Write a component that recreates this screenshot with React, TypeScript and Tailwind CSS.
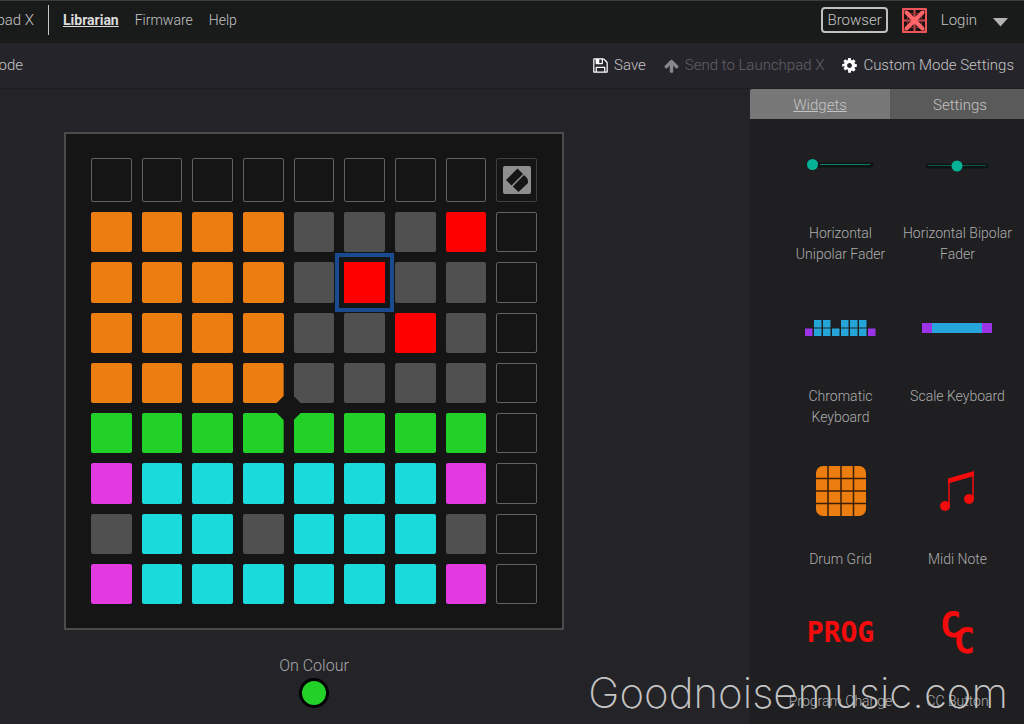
import React, { useState } from "react";
import clsx from "clsx";

const PAD_COLOURS: Record<string, string> = {
  ".": "border border-[#626262]",
  g: "bg-[#505050]",
  o: "bg-[#ec7d10]",
  r: "bg-[#ff0000]",
  n: "bg-[#22d128]",
  c: "bg-[#1adadb]",
  m: "bg-[#e03ae0]",
};

const PAD_ROWS = [
  "oooogggr.",
  "oooogrgg.",
  "ooooggrg.",
  "oooogggg.",
  "nnnnnnnn.",
  "mccccccm.",
  "gccgcccg.",
  "mccccccm.",
];

// the four middle pads have the corner facing the centre cut off
const CUT_CORNERS: Record<string, string> = {
  "3-3": "[clip-path:polygon(0_0,100%_0,100%_calc(100%-7px),calc(100%-7px)_100%,0_100%)]",
  "3-4": "[clip-path:polygon(0_0,100%_0,100%_100%,7px_100%,0_calc(100%-7px))]",
  "4-3": "[clip-path:polygon(0_0,calc(100%-7px)_0,100%_7px,100%_100%,0_100%)]",
  "4-4": "[clip-path:polygon(7px_0,100%_0,100%_100%,0_100%,0_7px)]",
};

const SaveIcon = () => (
  <svg viewBox="0 0 1536 1792" className="h-[17px] w-[15px]" fill="currentColor" aria-hidden="true">
    <path d="M384 1536h768v-384H384v384zm896 0h128V640q0-14-10-38.5t-20-34.5l-281-281q-10-10-34-20t-39-10v416q0 40-28 68t-68 28H352q-40 0-68-28t-28-68V256H128v1280h128v-416q0-40 28-68t68-28h832q40 0 68 28t28 68v416zM896 608V288q0-13-9.5-22.5T864 256H672q-13 0-22.5 9.500T640 288v320q0 13 9.500 22.500T672 640h192q13 0 22.500-9.500T896 608zm640 32v928q0 40-28 68t-68 28H96q-40 0-68-28t-28-68V224q0-40 28-68t68-28h928q40 0 88 20t76 48l280 280q28 28 48 76t20 88z" />
  </svg>
);

const ArrowUpIcon = () => (
  <svg viewBox="0 0 1664 1792" className="h-4 w-[15px]" fill="currentColor" aria-hidden="true">
    <path d="M1611 971q0 51-37 90l-75 75q-38 38-91 38-54 0-90-38l-294-293v704q0 52-37.5 84.500T896 1664H768q-53 0-90.500-32.500T640 1547V843l-294 293q-36 38-90 38t-90-38l-75-75q-38-38-38-90 0-53 38-91l651-651q35-37 90-37 54 0 91 37l651 651q37 39 37 91z" />
  </svg>
);

const CogIcon = () => (
  <svg viewBox="0 0 1536 1792" className="h-[17px] w-[15px]" fill="currentColor" aria-hidden="true">
    <path d="M1024 896q0-106-75-181t-181-75-181 75-75 181 75 181 181 75 181-75 75-181zm512-109v222q0 12-8 23t-20 13l-185 28q-19 54-39 91 35 50 107 138 10 12 10 25t-9 23q-27 37-99 108t-94 71q-12 0-26-9l-138-108q-44 23-91 38-16 136-29 186-7 28-36 28H657q-14 0-24.5-8.500T621 1506l-28-184q-49-16-90-37l-141 107q-10 9-25 9-14 0-25-11-126-114-165-168-7-10-7-23 0-12 8-23 15-21 51-66.500t54-70.500q-27-50-41-99L29 1025q-13-2-21-12.500T0 989V767q0-12 8-23t19-13l186-28q14-46 39-92-40-57-107-138-10-12-10-24 0-10 9-23 26-36 98.500-107.500T337 247q13 0 26 10l138 107q44-23 91-38 16-136 29-186 7-28 36-28h222q14 0 24.500 8.500T915 142l28 184q49 16 90 37l142-107q9-9 24-9 13 0 25 10 129 119 165 170 7 8 7 22 0 12-8 23-15 21-51 66.500t-54 70.500q26 50 41 98l183 28q13 2 21 12.500t8 23.500z" />
  </svg>
);

const DisconnectedIcon = () => (
  <svg viewBox="0 0 25 25" className="h-[25px] w-[25px]" aria-hidden="true">
    <rect width="25" height="25" rx="1" fill="#e8565a" />
    <rect x="2" y="2" width="21" height="21" rx="2" fill="#1f1112" />
    <path d="M12.500 2v21M2 12.500h21" stroke="#c94a4e" strokeWidth="2" />
    <rect x="5.500" y="5.500" width="14" height="14" rx="4" fill="none" stroke="#8e3538" strokeWidth="1" />
    <path d="M4.500 4.500l16 16M20.500 4.500l-16 16" stroke="#ff6569" strokeWidth="4" strokeLinecap="round" />
  </svg>
);

const NovationIcon = () => (
  <svg viewBox="0 0 28 28" className="h-7 w-7" aria-hidden="true">
    <rect width="28" height="28" rx="2" fill="#8e8e8e" />
    <path d="M14.500 2.500 20 8 8.500 19.500 3 14z" fill="#151515" />
    <path d="M21 9l3 3q1.500 2 1 5L15.500 26 9.800 20.500z" fill="#151515" />
  </svg>
);

const UnipolarFader = () => (
  <svg width="68" height="14" aria-hidden="true">
    <path d="M8 7h56" stroke="#0c1513" strokeWidth="5" strokeLinecap="round" />
    <path d="M13 6.500h50" stroke="#0d7f69" />
    <circle cx="5.500" cy="6.500" r="5.500" fill="#06b296" />
  </svg>
);

const BipolarFader = () => (
  <svg width="68" height="14" aria-hidden="true">
    <path d="M4 8h58" stroke="#0c1513" strokeWidth="5" strokeLinecap="round" />
    <path d="M4 7.500h58" stroke="#0b5a42" />
    <circle cx="33" cy="8" r="5.500" fill="#06b296" />
  </svg>
);

const ChromaticIcon = () => (
  <svg width="72" height="16" aria-hidden="true">
    {[9, 18, 36, 45, 54].map((x) => (
      <rect key={x} x={x} width="7.500" height="7.500" fill="#25a5da" />
    ))}
    {[0, 9, 18, 27, 36, 45, 54, 63].map((x) => (
      <rect key={x} x={x} y="8.500" width="7.500" height="7.500" fill={x % 63 ? "#25a5da" : "#9a34e6"} />
    ))}
  </svg>
);

const ScaleIcon = () => (
  <svg width="72" height="10" aria-hidden="true">
    <rect width="70" height="10" fill="#9a34e6" />
    <rect x="10" width="50" height="10" fill="#25a5da" />
  </svg>
);

const DrumGridIcon = () => (
  <svg width="50" height="50" aria-hidden="true">
    <rect width="50" height="50" rx="7" fill="#ec7d10" />
    <path d="M12 0v50M25 0v50M37.500 0v50M0 12.500h50M0 25h50M0 37.500h50" stroke="#3b1f06" strokeWidth="1.500" />
  </svg>
);

const MidiNoteIcon = () => (
  <svg width="38" height="42" aria-hidden="true">
    <path d="M10 37V10l24-7v26" fill="none" stroke="#f40b0b" strokeWidth="1.500" />
    <path d="M9 8.500 35 1v5L9 13.500z" fill="#f40b0b" />
    <circle cx="6" cy="36" r="5" fill="#f40b0b" />
    <circle cx="30" cy="29" r="5" fill="#f40b0b" />
  </svg>
);

const ProgIcon = () => (
  <span className="font-['DejaVu_Sans_Mono',monospace] text-[28px] leading-none font-bold text-[#f40b0b]">
    PROG
  </span>
);

const CCIcon = () => (
  <span className="flex font-['DejaVu_Sans_Mono',monospace] text-[36px] leading-none font-bold text-[#f40b0b]">
    <span className="-mr-2 pb-4">C</span>
    <span className="pt-4">C</span>
  </span>
);

const WIDGETS = [
  { label: "Horizontal Unipolar Fader", icon: <UnipolarFader /> },
  { label: "Horizontal Bipolar Fader", icon: <BipolarFader /> },
  { label: "Chromatic Keyboard", icon: <ChromaticIcon /> },
  { label: "Scale Keyboard", icon: <ScaleIcon /> },
  { label: "Drum Grid", icon: <DrumGridIcon /> },
  { label: "Midi Note", icon: <MidiNoteIcon /> },
  { label: "Program Change", icon: <ProgIcon /> },
  { label: "CC Button", icon: <CCIcon /> },
];

const Header = () => (
  <header className="flex h-[43px] shrink-0 items-center border-t border-[#3a4035] bg-[#191b1b] pr-4 pb-1 text-[15px]">
    <div className="flex w-[34px] justify-end overflow-hidden whitespace-nowrap">pad X</div>
    <div className="ml-3.5 h-[30px] w-px bg-[#c8c8c8]" />
    <nav className="ml-3.5 flex gap-4 text-sm">
      <a href="#librarian" className="font-bold text-[#dcdcdc] underline">
        Librarian
      </a>
      <a href="#firmware">Firmware</a>
      <a href="#help">Help</a>
    </nav>
    <div className="ml-auto flex items-center">
      <button className="h-[26px] rounded border-2 border-[#c0c0c0] px-1 leading-5">Browser</button>
      <span className="ml-3.5">
        <DisconnectedIcon />
      </span>
      <button className="ml-3.5 flex items-center gap-4">
        Login
        <svg width="15" height="9" className="mt-1" aria-hidden="true">
          <path d="M0 0h15L7.500 8.500z" fill="#b4b4b4" />
        </svg>
      </button>
    </div>
  </header>
);

const Toolbar = () => (
  <div className="flex h-[46px] shrink-0 items-center justify-between border-b border-[#1f1f22] bg-[#26242b] pr-2.5 text-[15px]">
    <div className="flex w-[23px] justify-end overflow-hidden">ode</div>
    <div className="flex gap-[18px]">
      <button className="flex items-center gap-1.5">
        <span className="text-white">
          <SaveIcon />
        </span>
        Save
      </button>
      <button className="flex items-center gap-1.5 text-[#626166]" disabled>
        <span className="text-[#88878b]">
          <ArrowUpIcon />
        </span>
        Send to Launchpad X
      </button>
      <button className="flex items-center gap-1.5">
        <span className="text-white">
          <CogIcon />
        </span>
        Custom Mode Settings
      </button>
    </div>
  </div>
);

const Board = () => {
  const [selected, setSelected] = useState("1-5");

  return (
    <div className="border-2 border-[#4b4b4b] bg-[#151515] px-[25px] py-6">
      <div className="grid h-[446px] grid-cols-9 grid-rows-[44px_repeat(8,1fr)] gap-2.5">
        {Array.from({ length: 8 }, (_, i) => (
          <button key={i} aria-label={`Top ${i + 1}`} className="rounded-xs border border-[#626262]" />
        ))}
        <div className="flex items-center justify-center rounded-xs border border-[#404040]">
          <NovationIcon />
        </div>
        {PAD_ROWS.map((row, y) =>
          row.split("").map((cell, x) => {
            const id = `${y}-${x}`;
            return (
              <button
                key={id}
                aria-label={`Pad ${y + 1}, ${x + 1}`}
                aria-pressed={selected === id}
                onClick={() => setSelected(id)}
                className={clsx(
                  PAD_COLOURS[cell],
                  CUT_CORNERS[id],
                  selected === id
                    ? "z-10 outline-4 outline-offset-5 outline-[#1a4a8f]"
                    : "rounded-xs"
                )}
              />
            );
          })
        )}
      </div>
    </div>
  );
};

const Sidebar = () => {
  const [tab, setTab] = useState("Widgets");

  return (
    <aside className="w-[274px] shrink-0 overflow-hidden bg-[#1f1f21]">
      <div className="flex h-[30px] text-[15px]" role="tablist">
        {["Widgets", "Settings"].map((name) => (
          <button
            key={name}
            role="tab"
            aria-selected={tab === name}
            onClick={() => setTab(name)}
            className={clsx(
              "w-[140px] shrink-0 pt-0.5",
              tab === name ? "rounded-tl-xs bg-[#777777] underline" : "bg-[#5a5a5a]"
            )}
          >
            {name}
          </button>
        ))}
      </div>
      <div className="grid grid-cols-2 gap-y-[23px] pt-1.5 pr-2 pl-8">
        {WIDGETS.map(({ label, icon }) => (
          <button key={label} className="flex flex-col items-center text-sm leading-[21px] text-[#adadad]">
            <span className="flex h-20 items-center justify-center">{icon}</span>
            <span className="mt-[18px]">{label}</span>
          </button>
        ))}
      </div>
    </aside>
  );
};

export default function App() {
  return (
    <div className="relative flex h-screen flex-col overflow-hidden bg-[#242328] font-[Roboto,sans-serif] text-base font-light text-[#c4c4c4]">
      <Header />
      <Toolbar />
      <main className="flex min-h-0 flex-1">
        <section className="flex-1 pt-[43px] pl-16">
          <div className="w-[500px]">
            <Board />
            <div className="mt-6 flex flex-col items-center text-[#a8a8a8]">
              <span>On Colour</span>
              <button
                aria-label="On Colour"
                className="h-[30px] w-[30px] rounded-full border-3 border-black bg-[#22d128]"
              />
            </div>
          </div>
        </section>
        <Sidebar />
      </main>
      <p className="pointer-events-none absolute right-4 bottom-1 font-[Inter,sans-serif] text-[42px] leading-[54px] font-extralight text-[#c4c4c4]">
        Goodnoisemusic.com
      </p>
    </div>
  );
}
